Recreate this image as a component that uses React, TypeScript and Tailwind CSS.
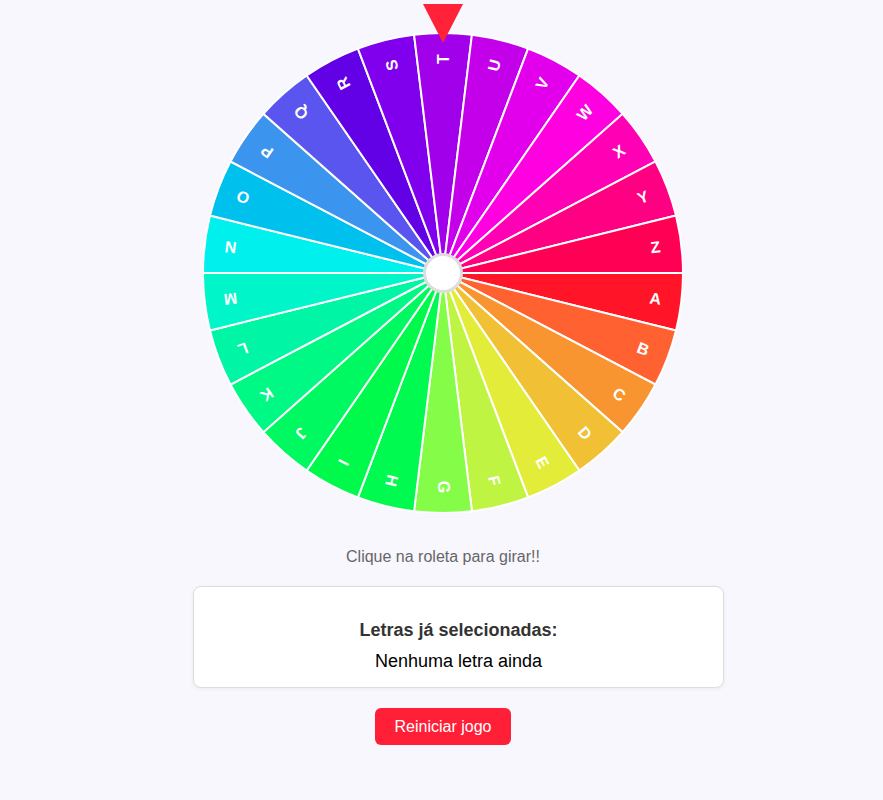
import React from "react";

// Segment colours, A..Z, clockwise from the right
const letters = "ABCDEFGHIJKLMNOPQRSTUVWXYZ".split("");
const colors = [
  "#ff1428", "#ff6130", "#f99530", "#f2c034", "#e4ec3a", "#c0f442", "#84fc48",
  "#00fa50", "#00fa4c", "#00f860", "#00f884", "#00f5a4", "#00f5c8", "#00f0ee",
  "#00c0ee", "#3b95ee", "#5a55ee", "#6200e6", "#8000ee", "#a000ea", "#c400ea",
  "#e200ec", "#ff00e0", "#ff00b4", "#ff0082", "#ff0055",
];

const SIZE = 480;
const R = 240;
const C = 240;
const step = 360 / letters.length;

const pt = (deg: number, r: number) => {
  const a = (deg * Math.PI) / 180;
  return [C + r * Math.cos(a), C + r * Math.sin(a)];
};

const Wheel: React.FC = () => (
  <svg width={SIZE} height={SIZE} viewBox={`0 0 ${SIZE} ${SIZE}`} className="block">
    {letters.map((l, i) => {
      const a0 = i * step;
      const a1 = (i + 1) * step;
      const [x0, y0] = pt(a0, R);
      const [x1, y1] = pt(a1, R);
      const mid = a0 + step / 2;
      const [tx, ty] = pt(mid, 214);
      return (
        <g key={l}>
          <path
            d={`M ${C} ${C} L ${x0} ${y0} A ${R} ${R} 0 0 1 ${x1} ${y1} Z`}
            fill={colors[i]}
            stroke="#ffffff"
            strokeWidth={2}
          />
          <text
            x={tx}
            y={ty}
            transform={`rotate(${mid} ${tx} ${ty})`}
            textAnchor="middle"
            dominantBaseline="central"
            fill="#ffffff"
            fontSize={16}
            fontWeight={700}
            fontFamily="'Liberation Sans', Arial, sans-serif"
          >
            {l}
          </text>
        </g>
      );
    })}
    <circle cx={C} cy={C} r={18.5} fill="#ffffff" stroke="#dddddd" strokeWidth={3} />
  </svg>
);

const App: React.FC = () => {
  return (
    <div
      className="min-h-[800px] w-full bg-[#f9f7fe] flex flex-col items-center"
      style={{ fontFamily: "'Liberation Sans', Arial, sans-serif" }}
    >
      {/* Roleta */}
      <div className="relative mt-[33px] ml-[3px] w-[480px] h-[480px] cursor-pointer">
        <Wheel />
        <svg
          width={40}
          height={39}
          viewBox="0 0 40 39"
          className="absolute top-[-29px] left-[220px]"
        >
          <polygon points="0,0 40,0 20,39" fill="#ff2238" />
        </svg>
      </div>

      <p className="mt-[32px] ml-[3px] text-base leading-6 text-[#666666]">
        Clique na roleta para girar!!
      </p>

      {/* Letras selecionadas */}
      <div className="self-start ml-[193px] mt-[17px] w-[531px] bg-white border border-[#dddddd] rounded-lg shadow-[0_1px_4px_rgba(0,0,0,0.06)] pt-[30px] pb-[12px] text-center">
        <h3 className="text-lg leading-[27px] font-bold text-[#333333]">Letras já selecionadas:</h3>
        <p className="mt-[4px] text-lg leading-[27px] text-black">Nenhuma letra ainda</p>
      </div>

      <button className="mt-[20px] ml-[3px] w-[136px] h-[37px] rounded-md bg-[#ff1f37] text-white text-base hover:bg-[#e61a30]">
        Reiniciar jogo
      </button>
    </div>
  );
};

export default App;
